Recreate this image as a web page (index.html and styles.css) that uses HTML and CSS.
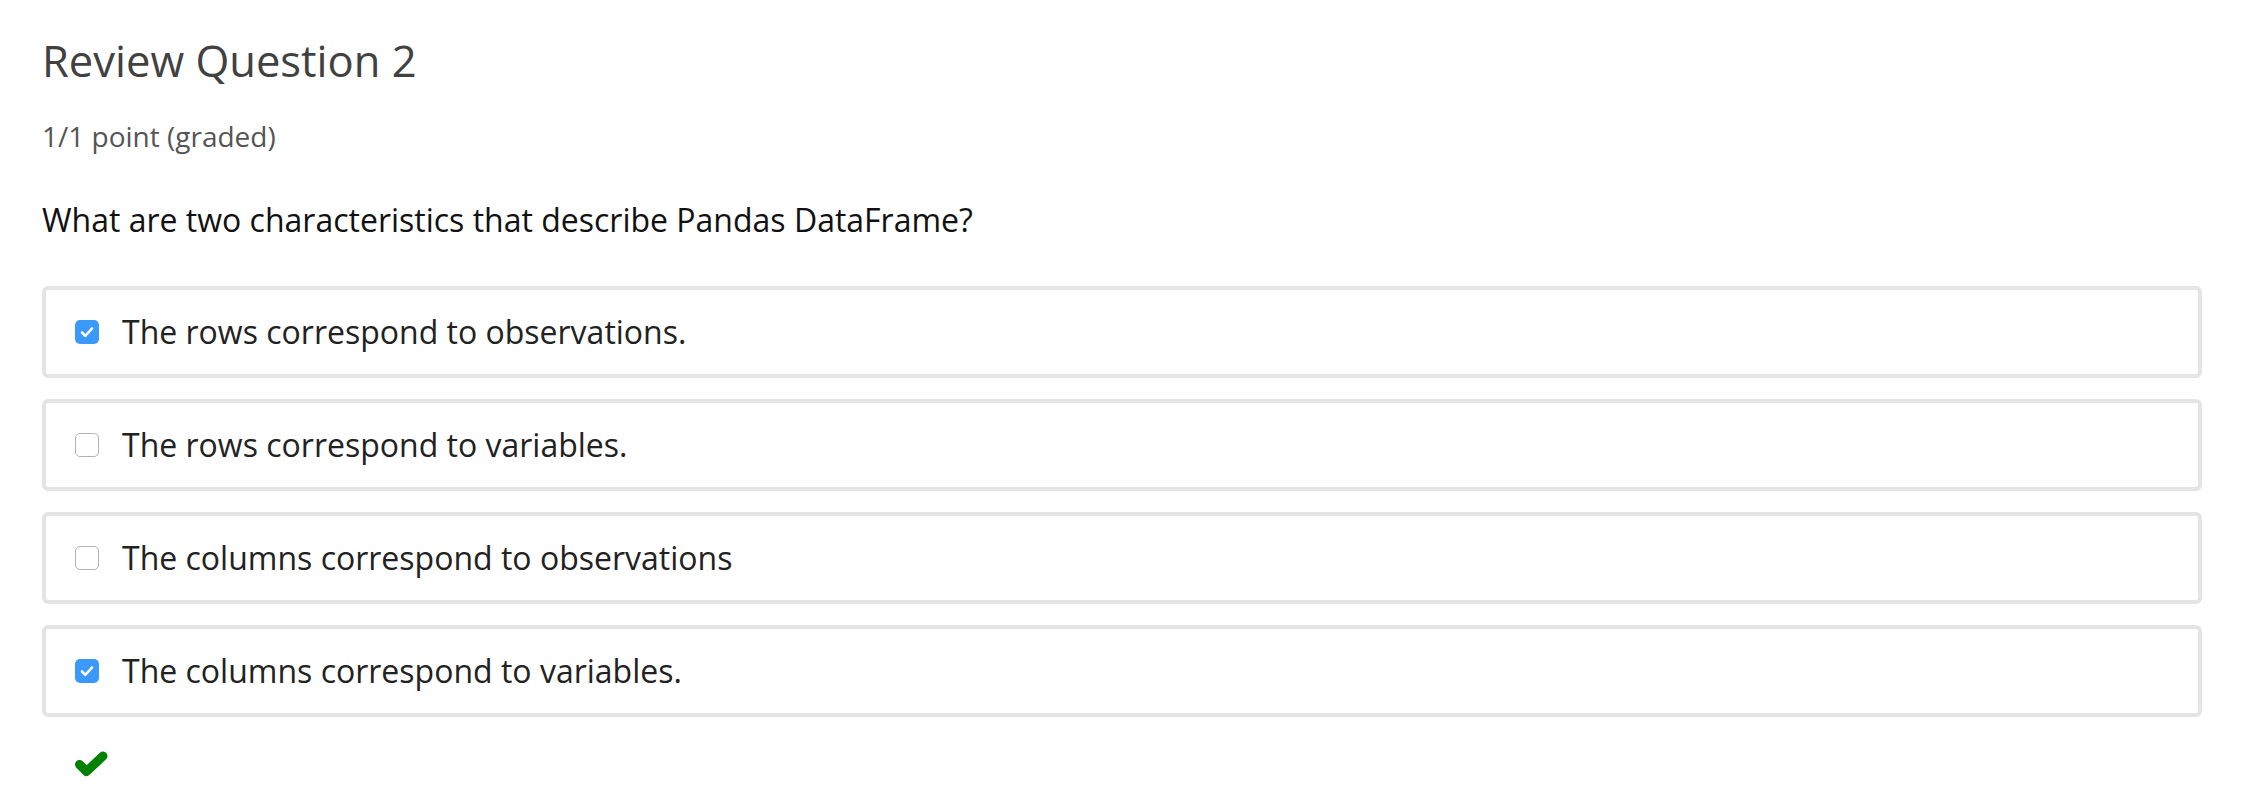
FILE: index.html
```html
<!DOCTYPE html>
<html>
<head>
<meta charset="utf-8">
<link rel="stylesheet" href="styles.css">
</head>
<body>
<div class="problem">
  <h3 class="title">Review Question 2</h3>
  <div class="score">1/1 point (graded)</div>
  <p class="question">What are two characteristics that describe Pandas DataFrame?</p>
  <div class="choices">
    <label class="choice"><span class="box checked"><svg viewBox="0 0 24 24" width="24" height="24"><path d="M7 12.5l3.3 3.4L17 8.5" fill="none" stroke="#fff" stroke-width="2.6" stroke-linecap="round" stroke-linejoin="round"/></svg></span><span class="label">The rows correspond to observations.</span></label>
    <label class="choice"><span class="box"></span><span class="label">The rows correspond to variables.</span></label>
    <label class="choice"><span class="box"></span><span class="label">The columns correspond to observations</span></label>
    <label class="choice"><span class="box checked"><svg viewBox="0 0 24 24" width="24" height="24"><path d="M7 12.5l3.3 3.4L17 8.5" fill="none" stroke="#fff" stroke-width="2.6" stroke-linecap="round" stroke-linejoin="round"/></svg></span><span class="label">The columns correspond to variables.</span></label>
  </div>
  <div class="status">
    <svg class="correct" viewBox="0 0 38 30" width="38" height="30"><polyline points="7.5,15.5 14.5,22.5 31,7" fill="none" stroke="#008100" stroke-width="9" stroke-linecap="round" stroke-linejoin="round"/></svg>
  </div>
</div>
</body>
</html>
```
FILE: styles.css
```css
html, body {
  margin: 0;
  padding: 0;
  background: #fff;
}
body {
  font-family: "Open Sans", "Liberation Sans", sans-serif;
}
.problem {
  padding: 36px 60px 0 42px;
  width: 2160px;
}
.title {
  margin: 0;
  font-size: 43.5px;
  font-weight: 400;
  line-height: 50px;
  color: #414141;
}
.score {
  margin-top: 30px;
  font-size: 28px;
  line-height: 40px;
  color: #555;
}
.question {
  margin: 42px 0 43.5px 0;
  font-size: 32px;
  line-height: 44px;
  color: #111;
}
.choices {
  display: flex;
  flex-direction: column;
  gap: 21px;
}
.choice {
  display: flex;
  align-items: center;
  border: 4px solid #e4e4e4;
  border-radius: 6px;
  padding: 20px 0 20px 29px;
  font-size: 32px;
  line-height: 44px;
  color: #222;
}
.box {
  width: 24px;
  height: 24px;
  box-sizing: border-box;
  border: 1.5px solid #b3b3b3;
  border-radius: 5px;
  background: #fff;
  flex: none;
  display: flex;
}
.box.checked {
  border: none;
  background: #3b99fc;
}
.label {
  margin-left: 23px;
}
.status {
  padding: 32px 0 0 30px;
}
.correct {
  display: block;
}
```
